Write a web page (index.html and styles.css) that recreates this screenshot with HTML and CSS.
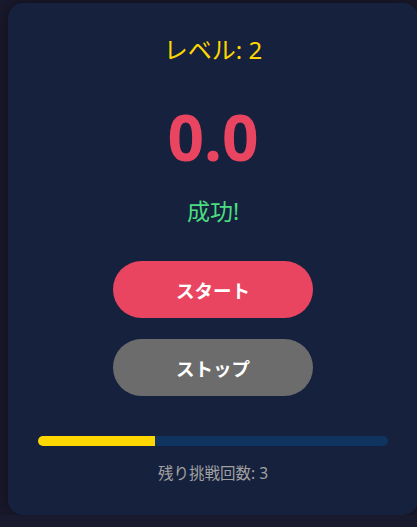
FILE: index.html
```html
<!DOCTYPE html>
<html lang="ja">
<head>
<meta charset="utf-8">
<title>タイマーゲーム</title>
<link rel="stylesheet" href="styles.css">
</head>
<body>
  <div class="card">
    <div class="level">レベル: 2</div>
    <div class="timer">0.0</div>
    <div class="result">成功!</div>
    <div class="buttons">
      <button class="btn btn-start">スタート</button>
      <button class="btn btn-stop">ストップ</button>
    </div>
    <div class="progress"><div class="progress-fill" style="width: 33.33%"></div></div>
    <div class="attempts">残り挑戦回数: 3</div>
  </div>
</body>
</html>
```

FILE: styles.css
```css
html, body {
  margin: 0;
  padding: 0;
}
body {
  background: #1a1a2e;
  font-family: "Noto Sans", "Noto Sans CJK JP", sans-serif;
  padding: 3px 0 0 8px;
  overflow: hidden;
}
.card {
  box-sizing: border-box;
  width: 410px;
  height: 512px;
  background: #16213e;
  border-radius: 15px;
  padding: 30px 30px;
  box-shadow: 0 0 20px rgba(0, 0, 0, 0.5);
  display: flex;
  flex-direction: column;
  align-items: center;
}
.level {
  color: #ffd700;
  font-size: 24px;
  line-height: 34px;
  height: 34px;
}
.timer {
  margin-top: 26px;
  color: #e94560;
  font-size: 64px;
  font-weight: 700;
  line-height: 88px;
  height: 88px;
}
.result {
  margin-top: 15px;
  color: #4ade80;
  font-size: 23px;
  line-height: 31px;
  height: 31px;
}
.buttons {
  margin-top: 34px;
  display: flex;
  flex-direction: column;
  align-items: center;
  gap: 21px;
}
.btn {
  width: 200px;
  height: 57px;
  border: none;
  border-radius: 30px;
  color: #ffffff;
  font-family: "Noto Sans CJK JP", sans-serif;
  font-size: 18.5px;
  font-weight: 700;
  padding: 0;
}
.btn-start {
  background: #e94560;
}
.btn-stop {
  background: #6c6c6c;
}
.progress {
  margin-top: 40px;
  width: 350px;
  height: 10px;
  border-radius: 5px;
  background: #0f3460;
  overflow: hidden;
}
.progress-fill {
  height: 100%;
  background: #ffd700;
}
.attempts {
  margin-top: 17px;
  color: #a0a0a0;
  font-size: 15.5px;
  line-height: 20px;
}
```
